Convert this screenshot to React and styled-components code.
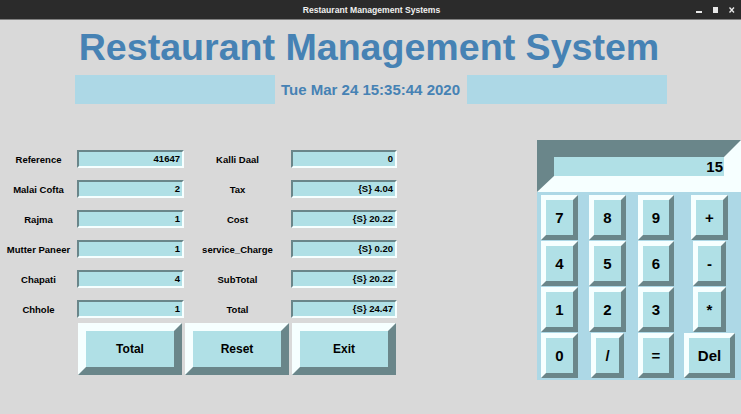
import React from "react"
import styled, { createGlobalStyle } from "styled-components"

const LIGHT = "#f6ffff"
const DARK = "#6a868a"

const GlobalStyle = createGlobalStyle`
  html, body {
    margin: 0;
    padding: 0;
    background: #d9d9d9;
    overflow: hidden;
  }
  body {
    font-family: "Liberation Sans", Arial, sans-serif;
  }
`

const Window = styled.div`
  width: 741px;
  height: 414px;
  display: flex;
  flex-direction: column;
  overflow: hidden;
`

const TitleBar = styled.div`
  height: 19px;
  background: #2b2b2b;
  border-bottom: 1px solid #808080;
  display: grid;
  grid-template-columns: 1fr auto 1fr;
  align-items: center;
  color: #f0f0f0;
`

const WindowTitle = styled.div`
  font-size: 8.6px;
  font-weight: bold;
  padding-left: 2px;
`

const Controls = styled.div`
  justify-self: end;
  display: flex;
  align-items: center;
  gap: 10px;
  padding-right: 6px;
`

const Heading = styled.h1`
  margin: 0;
  padding-top: 5px;
  padding-right: 3px;
  font-size: 37.6px;
  line-height: 44px;
  font-weight: bold;
  color: #4682b4;
  text-align: center;
`

const DateRow = styled.div`
  display: flex;
  justify-content: center;
  margin-top: 6px;
  height: 29px;
`

const DateBox = styled.div`
  width: 200px;
  background: #add8e6;
`

const DateText = styled.div`
  width: 192px;
  display: flex;
  align-items: center;
  justify-content: center;
  font-size: 15px;
  font-weight: bold;
  color: #4682b4;
`

const Main = styled.div`
  display: flex;
  margin-top: 36px;
`

const Form = styled.div`
  padding-top: 4px;
`

const FieldGrid = styled.div`
  display: grid;
  grid-template-columns: 77px 107px 107px 106px;
  grid-auto-rows: 30px;
`

const Label = styled.div`
  align-self: center;
  text-align: center;
  font-size: 9.5px;
  font-weight: bold;
  color: #000;
`

const Entry = styled.div`
  align-self: center;
  height: 18px;
  box-sizing: border-box;
  border: 2px solid;
  border-color: ${DARK} ${LIGHT} ${LIGHT} ${DARK};
  background: #b0e0e6;
  font-size: 9.5px;
  font-weight: bold;
  line-height: 14px;
  text-align: right;
  padding-right: 2px;
`

const ButtonRow = styled.div`
  display: flex;
  gap: 3px;
  padding-left: 78px;
  margin-top: -1px;
`

const BigButton = styled.div`
  width: 104px;
  height: 52px;
  box-sizing: border-box;
  border: 8px solid;
  border-color: ${LIGHT} ${DARK} ${DARK} ${LIGHT};
  background: #b0e0e6;
  display: flex;
  align-items: center;
  justify-content: center;
  font-size: 12px;
  font-weight: bold;
`

const Calculator = styled.div`
  margin-left: auto;
  width: 204px;
`

const Display = styled.div`
  height: 52px;
  box-sizing: border-box;
  border-style: solid;
  border-width: 17px 17px 16px 17px;
  border-color: ${DARK} ${LIGHT} ${LIGHT} ${DARK};
  background: #b0e0e6;
  font-size: 15px;
  font-weight: bold;
  line-height: 19px;
  text-align: right;
  padding-right: 1px;
`

const Keypad = styled.div`
  height: 188px;
  box-sizing: border-box;
  padding-top: 3px;
  background: #add8e6;
  display: grid;
  grid-template-columns: 45px 51px 46px 61px;
  grid-auto-rows: 46px;
`

const Key = styled.div`
  justify-self: center;
  height: 45px;
  box-sizing: border-box;
  border: 5px solid;
  border-color: ${LIGHT} ${DARK} ${DARK} ${LIGHT};
  background: #b0e0e6;
  padding: 0 9px;
  display: flex;
  align-items: center;
  justify-content: center;
  font-size: 15px;
  font-weight: bold;
`

const fields = [
  ["Reference", "41647", "Kalli Daal", "0"],
  ["Malai Cofta", "2", "Tax", "{S} 4.04"],
  ["Rajma", "1", "Cost", "{S} 20.22"],
  ["Mutter Paneer", "1", "service_Charge", "{S} 0.20"],
  ["Chapati", "4", "SubTotal", "{S} 20.22"],
  ["Chhole", "1", "Total", "{S} 24.47"],
]

const keys = ["7", "8", "9", "+", "4", "5", "6", "-", "1", "2", "3", "*", "0", "/", "=", "Del"]

export default function App() {
  return (
    <Window>
      <GlobalStyle />
      <TitleBar>
        <div />
        <WindowTitle>Restaurant Management Systems</WindowTitle>
        <Controls>
          <svg width="7" height="10" viewBox="0 0 7 10">
            <rect x="0" y="6" width="6" height="2" fill="#e8e8e8" />
          </svg>
          <svg width="6" height="10" viewBox="0 0 6 10">
            <rect x="0.5" y="2.5" width="4" height="5" fill="#e8e8e8" stroke="#e8e8e8" />
          </svg>
          <svg width="6" height="10" viewBox="0 0 6 10">
            <path d="M0.5 2.5 L5 7.5 M5 2.5 L0.5 7.5" stroke="#e8e8e8" strokeWidth="1.3" />
          </svg>
        </Controls>
      </TitleBar>

      <Heading>Restaurant Management System</Heading>

      <DateRow>
        <DateBox />
        <DateText>Tue Mar 24 15:35:44 2020</DateText>
        <DateBox />
      </DateRow>

      <Main>
        <Form>
          <FieldGrid>
            {fields.map(([l1, v1, l2, v2]) => (
              <React.Fragment key={l1}>
                <Label>{l1}</Label>
                <Entry>{v1}</Entry>
                <Label>{l2}</Label>
                <Entry>{v2}</Entry>
              </React.Fragment>
            ))}
          </FieldGrid>
          <ButtonRow>
            <BigButton>Total</BigButton>
            <BigButton>Reset</BigButton>
            <BigButton>Exit</BigButton>
          </ButtonRow>
        </Form>

        <Calculator>
          <Display>15</Display>
          <Keypad>
            {keys.map((k) => (
              <Key key={k}>{k}</Key>
            ))}
          </Keypad>
        </Calculator>
      </Main>
    </Window>
  )
}
